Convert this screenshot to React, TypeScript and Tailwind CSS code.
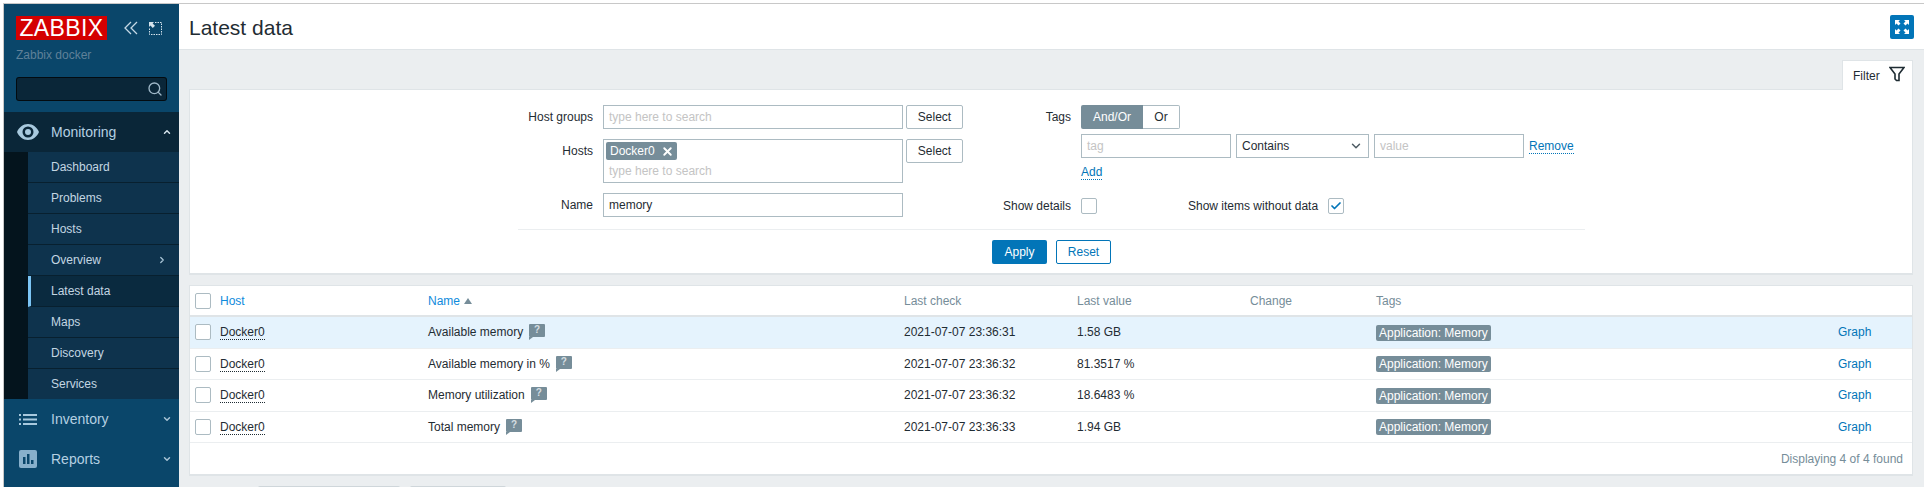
import React from 'react';
import { Search, ChevronUp, ChevronDown, ChevronRight, Check, X } from 'lucide-react';

const cols = 'grid grid-cols-[30px_208px_476px_173px_173px_126px_1fr_74px] items-center';
const field = 'h-6 border border-[#acbbc2] bg-white px-[5px] flex items-center';

const subItems = ['Dashboard', 'Problems', 'Hosts', 'Overview', 'Latest data', 'Maps', 'Discovery', 'Services'];

const rows = [
  { name: 'Available memory', check: '2021-07-07 23:36:31', value: '1.58 GB', h: 'h-[32px] pb-[1px]', tag: 'mt-[2px]', hover: true },
  { name: 'Available memory in %', check: '2021-07-07 23:36:32', value: '81.3517 %', h: 'h-[31px]', tag: '' },
  { name: 'Memory utilization', check: '2021-07-07 23:36:32', value: '18.6483 %', h: 'h-[32px] pb-[1px]', tag: 'mt-[2px]' },
  { name: 'Total memory', check: '2021-07-07 23:36:33', value: '1.94 GB', h: 'h-[31px]', tag: '' },
];

function Box({ checked }: { checked?: boolean }) {
  return (
    <span className="w-4 h-4 shrink-0 flex items-center justify-center bg-white border border-[#acbbc2] rounded-[2px]">
      {checked && <Check className="w-3 h-3 text-[#0275b8]" strokeWidth={3.5} />}
    </span>
  );
}

function SelectBtn() {
  return (
    <button className="w-[57px] h-6 ml-[3px] bg-white border border-[#acbbc2] rounded-[2px] text-[#1f2c33]">Select</button>
  );
}

function Help() {
  return (
    <span className="relative ml-[6px] -mt-[4px] w-4 h-[13px] flex items-center justify-center bg-[#768d99] rounded-[1px] text-[#d5dde1] text-[10px] font-bold leading-none">
      ?
      <span className="absolute left-0 top-full w-0 h-0 border-l-[4px] border-l-[#768d99] border-b-[3px] border-b-transparent" />
    </span>
  );
}

function NavTop({ icon, label, open }: { icon: React.ReactNode; label: string; open?: boolean }) {
  return (
    <div className={`flex items-center h-10 ${open ? 'bg-[#0a2638]' : ''}`}>
      <span className="w-[47px] pl-[13px] flex items-center">{icon}</span>
      <span className="flex-1 text-[14px] text-[#b5d0e2]">{label}</span>
      {open ? (
        <ChevronUp className="w-[10px] h-[10px] mr-[7px] text-[#d5e3ec]" strokeWidth={3.5} />
      ) : (
        <ChevronDown className="w-[10px] h-[10px] mr-[7px] text-[#a9c4d6]" strokeWidth={3.5} />
      )}
    </div>
  );
}

function Sidebar() {
  return (
    <aside className="w-[175px] shrink-0 bg-[#0a466a] overflow-hidden">
      <div className="h-[108px] pl-3 pt-3">
        <div className="flex items-center">
          <span className="w-[91px] h-6 bg-[#d40000] text-white text-[23px] leading-6 text-center tracking-[0.4px]">ZABBIX</span>
          <svg className="ml-[17px] w-[14px] h-[14px] text-[#c5d8e5]" viewBox="0 0 14 14" fill="none" stroke="currentColor" strokeWidth="1.3">
            <path d="M7 1 1 7l6 6M13 1 7 7l6 6" />
          </svg>
          <svg className="ml-[11px] w-[13px] h-[13px] text-[#d5e3ec]" viewBox="0 0 13 13" fill="none" stroke="currentColor">
            <path d="M6 .5h6.500v12H.5V6" strokeDasharray="1.500 1" />
            <path d="M0 0h5L3.600 1.400 6 3.800 3.800 6 1.400 3.600 0 5z" fill="currentColor" stroke="none" />
          </svg>
        </div>
        <div className="mt-[7px] text-[#5f8199] leading-[16px]">Zabbix docker</div>
        <div className="mt-[14px] w-[151px] h-6 bg-[#0a2638] border border-black/70 rounded-[3px] flex items-center justify-end pr-[3px]">
          <Search className="w-4 h-4 text-[#9fb8c8]" strokeWidth={2} />
        </div>
      </div>
      <NavTop
        open
        label="Monitoring"
        icon={
          <svg className="w-[22px] h-[16px] text-[#a8c9de]" viewBox="0 0 22 16" fill="currentColor">
            <path
              fillRule="evenodd"
              d="M11 0c5 0 9 3.500 11 8-2 4.500-6 8-11 8S2 12.500 0 8c2-4.500 6-8 11-8zm0 2.500a5.500 5.500 0 1 0 0 11 5.500 5.500 0 0 0 0-11zm0 2.500a3 3 0 1 1 0 6 3 3 0 0 1 0-6z"
            />
          </svg>
        }
      />
      <div className="bg-[#04141d] pl-6 h-[247px] overflow-hidden">
        {subItems.map((item) => (
          <div
            key={item}
            className={`h-[31px] flex items-center justify-between pr-[15px] border-b border-[#08202f] ${
              item === 'Latest data'
                ? 'bg-[#0a2a3f] border-l-[3px] border-l-[#7cc5f5] pl-[20px]'
                : 'bg-[#0e334d] pl-[23px]'
            } text-[#c3d6e2]`}
          >
            {item}
            {item === 'Overview' && <ChevronRight className="w-[10px] h-[10px] -mr-[3px] text-[#a9c4d6]" strokeWidth={3} />}
          </div>
        ))}
      </div>
      <NavTop
        label="Inventory"
        icon={
          <svg className="ml-[2px] w-[18px] h-[11px] text-[#a8c9de]" viewBox="0 0 18 11" fill="currentColor">
            <path d="M0 0h2v2H0zM4 0h14v2H4zM0 4.500h2v2H0zM4 4.500h14v2H4zM0 9h2v2H0zM4 9h14v2H4z" />
          </svg>
        }
      />
      <NavTop
        label="Reports"
        icon={
          <svg className="ml-[2px] w-[18px] h-[18px]" viewBox="0 0 18 18">
            <rect width="18" height="18" rx="2" fill="#88b0cb" />
            <path d="M4 7h2.500v7H4zM8 4h2.500v10H8zM12 10h2.500v4H12z" fill="#0a466a" />
          </svg>
        }
      />
    </aside>
  );
}

function FilterPanel() {
  return (
    <div className="h-[186px] bg-white border border-[#dfe4e7] border-b-2 flex flex-col">
      <div className="h-[139px] shrink-0 flex pt-[15px]">
        <div className="w-[413px] shrink-0 flex flex-col items-end pr-[10px] text-[#1f2c33]">
          <div className="h-6 flex items-center">Host groups</div>
          <div className="h-6 mt-[10px] flex items-center">Hosts</div>
          <div className="h-6 mt-[30px] flex items-center">Name</div>
        </div>
        <div className="w-[360px] shrink-0 flex flex-col">
          <div className="flex">
            <div className={`${field} w-[300px] text-[#c4c4c4]`}>type here to search</div>
            <SelectBtn />
          </div>
          <div className="flex mt-[10px]">
            <div className="w-[300px] h-[44px] border border-[#acbbc2] bg-white px-[2px] pt-[2px]">
              <span className="inline-flex items-center h-[18px] pl-[4px] pr-[3px] rounded-[2px] bg-[#768d99] text-white">
                Docker0
                <X className="w-[13px] h-[13px] ml-[6px]" strokeWidth={3.5} />
              </span>
              <div className="pl-[3px] mt-[2px] leading-[18px] text-[#c4c4c4]">type here to search</div>
            </div>
            <SelectBtn />
          </div>
          <div className={`${field} w-[300px] mt-[10px] text-[#1f2c33]`}>memory</div>
        </div>
        <div className="flex-1 flex flex-col">
          <div className="flex">
            <div className="w-[118px] h-6 shrink-0 pr-[10px] flex items-center justify-end text-[#1f2c33]">Tags</div>
            <div>
              <div className="flex h-6">
                <span className="w-[62px] bg-[#768d99] rounded-l-[2px] text-white flex items-center justify-center">And/Or</span>
                <span className="w-[37px] border border-[#acbbc2] border-l-0 rounded-r-[2px] text-[#1f2c33] flex items-center justify-center">Or</span>
              </div>
              <div className="flex items-center mt-[5px]">
                <div className={`${field} w-[150px] text-[#c4c4c4]`}>tag</div>
                <div className={`${field} w-[133px] ml-[5px] justify-between text-[#1f2c33]`}>
                  Contains
                  <ChevronDown className="w-[14px] h-[14px] text-[#4d5b63]" strokeWidth={2.5} />
                </div>
                <div className={`${field} w-[150px] ml-[5px] text-[#c4c4c4]`}>value</div>
                <span className="ml-[5px] text-[#0275b8] border-b border-dotted border-[#0275b8] leading-[14px]">Remove</span>
              </div>
              <div className="mt-[5px] h-4">
                <span className="text-[#0275b8] border-b border-dotted border-[#0275b8] leading-[14px] inline-block">Add</span>
              </div>
            </div>
          </div>
          <div className="flex items-center h-4 mt-[19px] text-[#1f2c33]">
            <div className="w-[118px] shrink-0 pr-[10px] text-right">Show details</div>
            <Box />
            <span className="ml-[91px]">Show items without data</span>
            <span className="ml-[10px]"><Box checked /></span>
          </div>
        </div>
      </div>
      <div className="ml-[328px] mr-[327px] border-t border-[#ebeef0]" />
      <div className="flex pl-[802px] gap-[9px] pt-[10px]">
        <button className="w-[55px] h-6 rounded-[2px] bg-[#0275b8] text-white">Apply</button>
        <button className="w-[55px] h-6 rounded-[2px] bg-white border border-[#0275b8] text-[#0275b8]">Reset</button>
      </div>
    </div>
  );
}

function DataTable() {
  return (
    <div className="mt-[10px] h-[191px] bg-white border border-[#dfe4e7] border-b-2">
      <div className={`${cols} h-[29px] text-[#768d99]`}>
        <span className="pl-[5px]"><Box /></span>
        <span className="text-[#0f8bdc]">Host</span>
        <span className="flex items-center text-[#0f8bdc]">
          Name
          <span className="ml-[4px] w-0 h-0 border-x-[4px] border-x-transparent border-b-[6px] border-b-[#768d99]" />
        </span>
        <span>Last check</span>
        <span>Last value</span>
        <span>Change</span>
        <span>Tags</span>
        <span />
      </div>
      <div className="border-t-2 border-[#dfe4e7]">
        {rows.map((r) => (
          <div key={r.name} className={`${cols} ${r.h} border-b border-[#ebeef0] text-[#1f2c33] ${r.hover ? 'bg-[#e5f3fd]' : ''}`}>
            <span className="pl-[5px]"><Box /></span>
            <span><span className="border-b border-dotted border-[#1f2c33] leading-[14px] inline-block">Docker0</span></span>
            <span className="flex items-center">{r.name}<Help /></span>
            <span>{r.check}</span>
            <span>{r.value}</span>
            <span />
            <span className={r.tag}><span className="inline-block h-4 leading-4 px-[3px] rounded-[2px] bg-[#768d99] text-white">Application: Memory</span></span>
            <span className="text-[#0275b8]">Graph</span>
          </div>
        ))}
      </div>
      <div className="h-[32px] flex items-center justify-end pr-[9px] text-[#768d99]">Displaying 4 of 4 found</div>
    </div>
  );
}

export default function App() {
  return (
    <div className="h-[487px] overflow-hidden bg-white pt-[3px] pl-[3px] text-[12px] font-['Liberation_Sans',Arial,sans-serif]">
      <div className="h-[484px] flex border-t border-l border-[#c8c8c8]">
        <Sidebar />
        <main className="flex-1 min-w-0 flex flex-col bg-[#ebeef0]">
          <header className="h-[46px] shrink-0 bg-white border-b border-[#dfe4e7] flex items-center justify-between pl-[10px] pr-[10px]">
            <h1 className="pt-[2px] text-[21px] text-[#1f2c33]">Latest data</h1>
            <button className="w-6 h-6 rounded-[2px] bg-[#0275b8] flex items-center justify-center">
              <svg className="w-[14px] h-[14px] text-white" viewBox="0 0 14 14" fill="currentColor">
                <path d="M0 0h5L3.500 1.500 5.500 3.500 3.500 5.500 1.500 3.500 0 5zM14 0v5l-1.500-1.500-2 2-2-2 2-2L9 0zM0 14V9l1.500 1.500 2-2 2 2-2 2L5 14zM14 14H9l1.500-1.500-2-2 2-2 2 2L14 9z" />
              </svg>
            </button>
          </header>
          <div className="flex-1 pl-[10px] pr-[11px] pt-[10px]">
            <div className="flex justify-end">
              <div className="w-[71px] h-[30px] -mb-px relative z-10 bg-white border border-[#dfe4e7] border-b-0 flex items-center pl-[10px] text-[#1f2c33]">
                Filter
                <svg className="ml-[9px] -mt-[3px] w-4 h-4" viewBox="0 0 16 16" fill="none" stroke="#1f2c33" strokeWidth="1.600">
                  <path d="M1 1.500h14L10 8v6.500H7.500L6 13V8z" />
                </svg>
              </div>
            </div>
            <FilterPanel />
            <DataTable />
            <div className="flex mt-[10px] ml-[69px] gap-[10px]">
              <div className="w-[142px] h-6 bg-[#cfd6da] rounded-[2px]" />
              <div className="w-[96px] h-6 bg-[#cfd6da] rounded-[2px]" />
            </div>
          </div>
        </main>
      </div>
    </div>
  );
}
